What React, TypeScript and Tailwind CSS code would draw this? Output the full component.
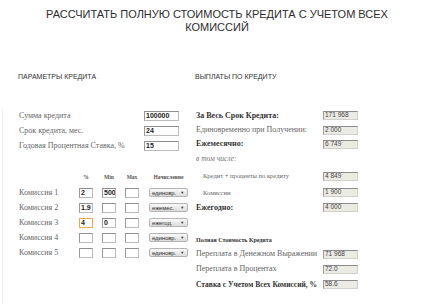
import React from "react";

const serif = { fontFamily: '"Liberation Serif", "Times New Roman", serif' };
const sans = { fontFamily: '"Liberation Sans", Arial, sans-serif' };

interface Fee {
  label: string;
  pct: string;
  min: string;
  max: string;
  mode: string;
  focused?: boolean;
}

const fees: Fee[] = [
  { label: "Комиссия 1", pct: "2", min: "500", max: "", mode: "единовр." },
  { label: "Комиссия 2", pct: "1.9", min: "", max: "", mode: "ежемес." },
  { label: "Комиссия 3", pct: "4", min: "0", max: "", mode: "ежегод.", focused: true },
  { label: "Комиссия 4", pct: "", min: "", max: "", mode: "единовр." },
  { label: "Комиссия 5", pct: "", min: "", max: "", mode: "единовр." },
];

const Field: React.FC<{ value: string; w: string; focused?: boolean }> = ({ value, w, focused }) => (
  <input
    readOnly
    value={value}
    style={sans}
    className={`${w} h-[10px] bg-white pl-[1px] text-[7px] font-bold leading-none text-[#222] outline-none ${
      focused
        ? "border border-[#f0a848]"
        : "border border-[#bcbcbc] border-t-[#8f8f8f] border-l-[#9a9a9a]"
    }`}
  />
);

const Output: React.FC<{ value: string }> = ({ value }) => (
  <div
    style={sans}
    className="flex h-[9px] w-[35px] shrink-0 items-center border border-[#d0d0cc] border-t-[#8c8c8c] border-l-[#9c9c9c] bg-[#ebebe4] pl-[1px] text-[6.5px] leading-none text-[#444]"
  >
    {value}
  </div>
);

const Select: React.FC<{ value: string }> = ({ value }) => (
  <div
    style={sans}
    className="flex h-[9px] w-[39px] items-center justify-between whitespace-nowrap rounded-[2px] border border-[#b4b4b4] bg-gradient-to-b from-[#fafafa] to-[#dcdcdc] pl-[2px] pr-[3px] text-[6px] leading-none tracking-[-0.1px] text-[#333]"
  >
    <span>{value}</span>
    <span className="text-[4px]">▼</span>
  </div>
);

const App: React.FC = () => {
  return (
    <div className="flex h-[304px] w-[434px] flex-col overflow-hidden bg-white">
      {/* Title */}
      <h1
        style={sans}
        className="mx-auto w-[380px] pt-[8px] text-center text-[11px] font-normal leading-[13px] text-[#2d2d2d]"
      >
        РАССЧИТАТЬ ПОЛНУЮ СТОИМОСТЬ КРЕДИТА С УЧЕТОМ ВСЕХ КОМИССИЙ
      </h1>

      {/* Section headers */}
      <div style={sans} className="mt-[38px] flex h-[10px] items-center pl-[18px] text-[7px] text-[#333]">
        <span className="w-[177px]">ПАРАМЕТРЫ КРЕДИТА</span>
        <span>ВЫПЛАТЫ ПО КРЕДИТУ</span>
      </div>

      <div style={serif} className="ml-[2px] mt-[26px] flex flex-1 border-l border-[#eef0f2] pl-[16px]">
        {/* Parameters */}
        <div className="w-[177px] shrink-0 text-[8px] text-[#666]">
          {[
            ["Сумма кредита", "100000"],
            ["Срок кредита, мес.", "24"],
            ["Годовая Процентная Ставка, %", "15"],
          ].map(([label, value]) => (
            <div key={label} className="flex h-[15px] items-center">
              <span className="w-[125px] whitespace-nowrap">{label}</span>
              <Field value={value} w="w-[35px]" />
            </div>
          ))}

          <div className="mt-[17px] flex h-[15px] items-center text-[5.5px] font-bold text-[#555]">
            <span className="w-[60px]" />
            <span className="w-[14px] text-center">%</span>
            <span className="ml-[9px] w-[14px] text-center">Min</span>
            <span className="ml-[9px] w-[14px] text-center">Max</span>
            <span className="ml-[10px] w-[39px] text-center">Начисление</span>
          </div>

          {fees.map((f) => (
            <div key={f.label} className="flex h-[15px] items-center">
              <span className="w-[60px]">{f.label}</span>
              <Field value={f.pct} w="w-[14px]" focused={f.focused} />
              <span className="ml-[9px] flex">
                <Field value={f.min} w="w-[14px]" />
              </span>
              <span className="ml-[9px] flex">
                <Field value={f.max} w="w-[14px]" />
              </span>
              <span className="ml-[10px] flex">
                <Select value={f.mode} />
              </span>
            </div>
          ))}
        </div>

        {/* Payments */}
        <div className="whitespace-nowrap text-[8px] text-[#666]">
          <div className="flex h-[15px] items-center">
            <span className="w-[127px] font-bold text-[#333]">За Весь Срок Кредита:</span>
            <Output value="171 968" />
          </div>
          <div className="flex h-[14px] items-center">
            <span className="w-[127px]">Единовременно при Получении:</span>
            <Output value="2 000" />
          </div>
          <div className="flex h-[14px] items-center">
            <span className="w-[127px] font-bold text-[#333]">Ежемесячно:</span>
            <Output value="6 749" />
          </div>
          <div className="flex h-[16px] items-center text-[7.5px] italic text-[#777]">в том числе:</div>
          <div className="flex h-[18px] items-center">
            <span className="w-[127px] pl-[7px] text-[6.5px]">Кредит + проценты по кредиту</span>
            <Output value="4 849" />
          </div>
          <div className="flex h-[15px] items-center">
            <span className="w-[127px] pl-[7px] text-[6.5px]">Комиссии</span>
            <Output value="1 900" />
          </div>
          <div className="flex h-[15px] items-center">
            <span className="w-[127px] font-bold text-[#333]">Ежегодно:</span>
            <Output value="4 000" />
          </div>

          <div className="mt-[18px] flex h-[14px] items-center text-[6px] font-bold text-[#333]">
            Полная Стоимость Кредита
          </div>
          <div className="flex h-[14px] items-center">
            <span className="w-[127px]">Переплата в Денежном Выражении</span>
            <Output value="71 968" />
          </div>
          <div className="flex h-[16px] items-center">
            <span className="w-[127px]">Переплата в Процентах</span>
            <Output value="72.0" />
          </div>
          <div className="flex h-[15px] items-center">
            <span className="w-[127px] text-[7.5px] font-bold text-[#333]">Ставка с Учетом Всех Комиссий, %</span>
            <Output value="58.6" />
          </div>
        </div>
      </div>
    </div>
  );
};

export default App;
